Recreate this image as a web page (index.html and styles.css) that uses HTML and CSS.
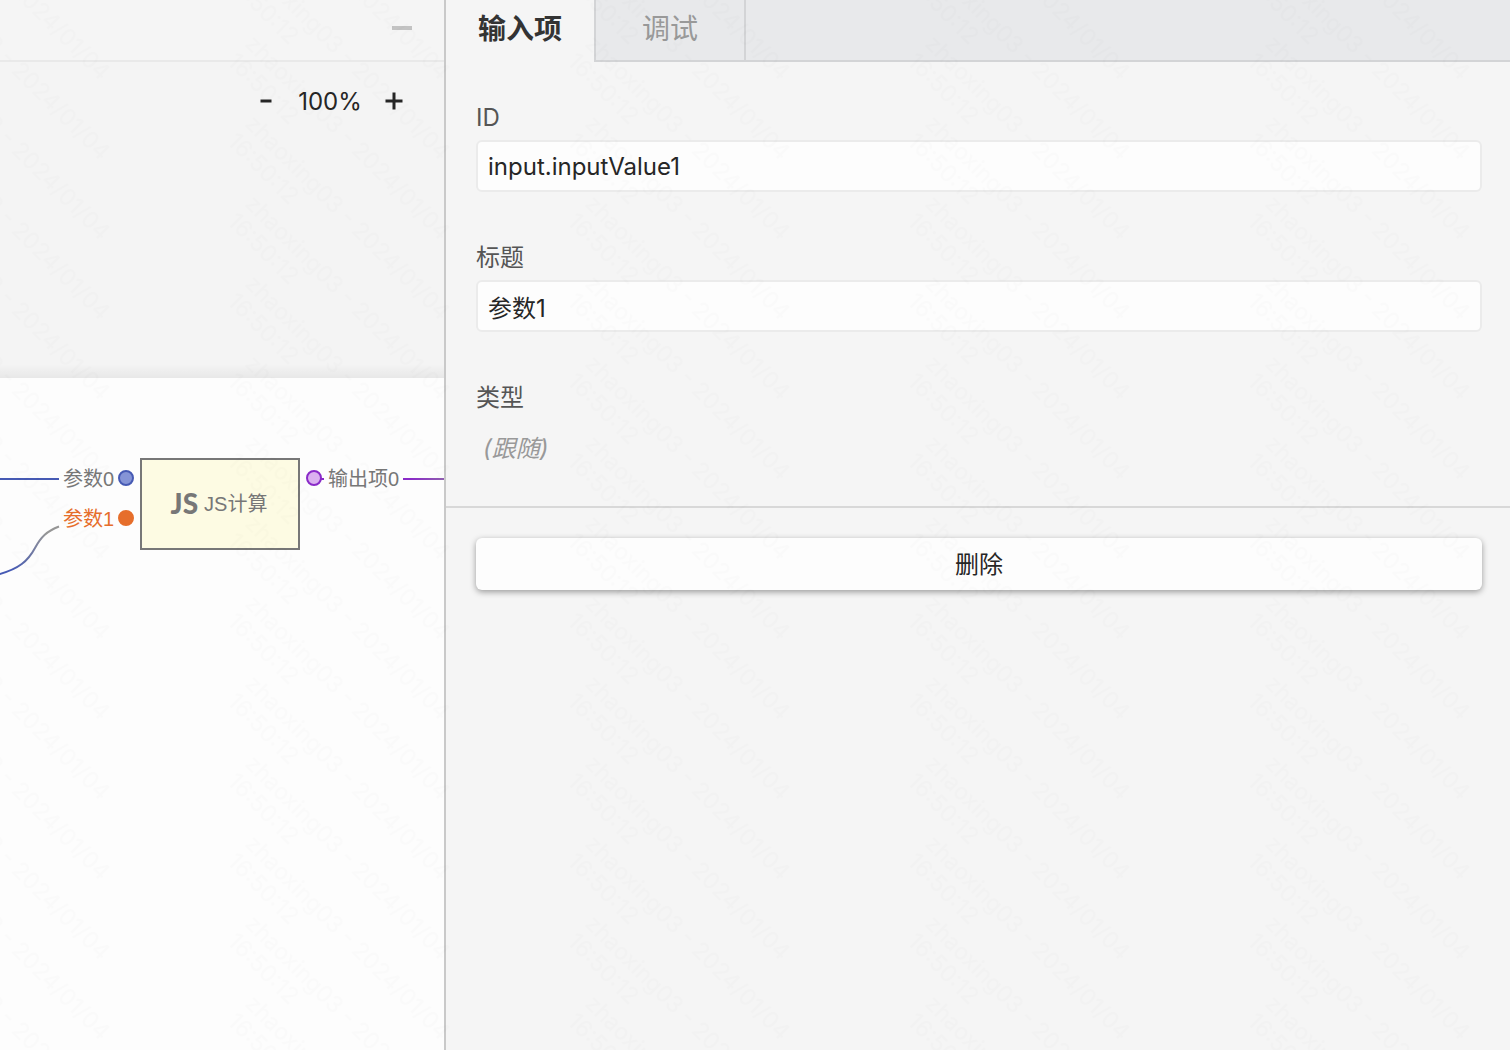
FILE: index.html
```html
<!DOCTYPE html>
<html lang="zh-CN">
<head>
<meta charset="utf-8">
<title>输入项</title>
<link rel="stylesheet" href="styles.css">
</head>
<body>
<div class="app">
  <main class="editor">
    <header class="editor-header">
      <button class="collapse" type="button" aria-label="收起"><span class="collapse-bar"></span></button>
    </header>
    <div class="zoom-area">
      <div class="zoom">
        <button class="zoom-btn" type="button" aria-label="缩小"><svg width="20" height="20" viewBox="0 0 20 20"><path d="M4.500 10H15.500" /></svg></button>
        <span class="zoom-value">100%</span>
        <button class="zoom-btn" type="button" aria-label="放大"><svg width="20" height="20" viewBox="0 0 20 20"><path d="M1.500 10H18.500M10 1.500V18.500" /></svg></button>
      </div>
    </div>
    <section class="canvas">
      <svg class="wires" width="444" height="240" viewBox="0 0 444 240" aria-hidden="true">
        <defs>
          <linearGradient id="wire-in" gradientUnits="userSpaceOnUse" x1="10" y1="190" x2="46" y2="155">
            <stop offset="0" stop-color="#465ab4" />
            <stop offset="1" stop-color="#969696" />
          </linearGradient>
          <linearGradient id="wire-out" gradientUnits="userSpaceOnUse" x1="403" y1="0" x2="480" y2="0">
            <stop offset="0.1" stop-color="#8a2bc8" />
            <stop offset="1" stop-color="#969696" />
          </linearGradient>
        </defs>
        <path d="M0 101H59" stroke="#465ab4" />
        <path d="M-2 196.500C19 191 28 183 35 170C41 159 47 153 59 148.500" stroke="url(#wire-in)" />
        <path d="M320 101H324" stroke="#8a2bc8" />
        <path d="M403 100H444V102H403Z" fill="url(#wire-out)" stroke="none" />
      </svg>
      <div class="port port-in port-first"><span>参数0</span><i class="dot dot-blue"></i></div>
      <div class="port port-in port-second"><span>参数1</span><i class="dot dot-orange"></i></div>
      <div class="node"><b class="node-logo">JS</b><span>JS计算</span></div>
      <div class="port port-out"><i class="dot dot-purple"></i><span>输出项0</span></div>
    </section>
  </main>
  <aside class="panel">
    <div class="tabs" role="tablist">
      <button class="tab tab-active" type="button" role="tab" aria-selected="true">输入项</button>
      <button class="tab" type="button" role="tab" aria-selected="false">调试</button>
      <div class="tabs-rest"></div>
    </div>
    <form class="form">
      <div class="field">
        <label for="f-id">ID</label>
        <input id="f-id" type="text" value="input.inputValue1">
      </div>
      <div class="field">
        <label for="f-title">标题</label>
        <input id="f-title" type="text" value="参数1">
      </div>
      <div class="field">
        <label for="f-type">类型</label>
        <output id="f-type">(跟随)</output>
      </div>
    </form>
    <div class="actions">
      <button class="delete" type="button">删除</button>
    </div>
  </aside>
</div>
<svg class="watermark" width="100%" height="100%" aria-hidden="true">
  <defs>
    <g id="mark" transform="translate(244 45) rotate(45)">
      <text x="0" y="0">zhaoxing03 - 2024/01/04</text>
      <text x="0" y="25">16:50:12</text>
    </g>
    <g id="column">
      <use href="#mark" y="-240" />
      <use href="#mark" y="-160" />
      <use href="#mark" y="-80" />
      <use href="#mark" />
      <use href="#mark" y="80" />
    </g>
    <pattern id="marks" width="340" height="80" patternUnits="userSpaceOnUse">
      <use href="#column" x="-340" />
      <use href="#column" />
    </pattern>
  </defs>
  <rect width="100%" height="100%" fill="url(#marks)" />
</svg>
</body>
</html>
```
FILE: styles.css
```css
* { box-sizing: border-box; }

body {
  margin: 0;
  background: #f5f5f5;
  color: #262626;
  font: 24px/34px Inter, "Noto Sans CJK SC", sans-serif;
}

button {
  margin: 0;
  padding: 0;
  border: 0;
  background: none;
  color: inherit;
  font: inherit;
  cursor: pointer;
}

.app { display: flex; min-height: 100vh; }

.editor {
  flex: 0 0 444px;
  display: flex;
  flex-direction: column;
  overflow: hidden;
}

.editor-header {
  display: flex;
  justify-content: flex-end;
  height: 62px;
  padding-right: 32px;
  border-bottom: 2px solid #e9e9e9;
}

.collapse { display: flex; align-items: center; height: 56px; }
.collapse-bar { width: 20px; height: 4px; background: #c3c3c3; }

.zoom-area {
  height: 316px;
  padding: 21px 40px;
  background: linear-gradient(#0000 302px, #0000000d) #f4f4f4;
}

.zoom { display: flex; justify-content: flex-end; align-items: center; }
.zoom-btn { display: flex; }
.zoom-btn path { fill: none; stroke: #262626; stroke-width: 3; stroke-linecap: butt; }
.zoom-value { width: 108px; padding-top: 2px; text-align: center; }

.canvas {
  position: relative;
  flex: 1;
  min-height: 240px;
  background: #fdfdfd;
  color: #777;
  font: 20px/28px "Liberation Sans", "Noto Sans CJK SC", sans-serif;
}

.wires { display: block; fill: none; stroke-width: 2; }

.port { position: absolute; display: flex; align-items: center; gap: 4px; white-space: nowrap; }
.port span { padding-top: 2px; }
.port-first { left: 63px; top: 85px; }
.port-second { left: 63px; top: 125px; color: #e66e2b; }
.port-out { left: 306px; top: 85px; gap: 6px; }

.dot { width: 16px; height: 16px; border: 2px solid; border-radius: 50%; }
.dot-blue { border-color: #465ab4; background: #8594d6; }
.dot-orange { border-color: #e66e2b; background: #e66e2b; }
.dot-purple { border-color: #8a2bc8; background: #dbb1f0; }

.node {
  position: absolute;
  left: 140px;
  top: 80px;
  display: flex;
  justify-content: center;
  align-items: center;
  gap: 6px;
  width: 160px;
  height: 92px;
  padding-right: 2px;
  border: 2px solid #777;
  background: #fdfbe3;
}

.node-logo { padding-bottom: 2px; font: 900 28px/28px Lato, sans-serif; }

.panel { flex: 1; min-width: 0; border-left: 2px solid #c9c9c9; }

.tabs { display: flex; height: 62px; font-size: 28px; }

.tab {
  width: 150px;
  padding-bottom: 2px;
  border-right: 2px solid #d3d4d6;
  border-bottom: 2px solid #d3d4d6;
  background: #e8e9eb;
  color: #999;
}

.tab-active { padding-bottom: 4px; border-bottom: 0; background: #f5f5f5; color: #333; font-weight: 700; }
.tabs-rest { flex: 1; border-bottom: 2px solid #d3d4d6; background: #e8e9eb; }

.form {
  display: flex;
  flex-direction: column;
  gap: 48px;
  padding: 38px 28px 30px 30px;
  border-bottom: 2px solid #d8d8d8;
}

.field { display: flex; flex-direction: column; gap: 6px; }
.field label { padding-top: 2px; color: #555; line-height: 32px; }

.field input {
  width: 100%;
  height: 52px;
  padding: 0 10px;
  border: 2px solid #ebebeb;
  border-radius: 6px;
  background: #fdfdfd;
  color: inherit;
  font: inherit;
}

.field output { padding: 2px 0 0 7px; color: #999; font-style: italic; line-height: 54px; }

.actions { padding: 30px 28px 30px 30px; }

.delete {
  display: block;
  width: 100%;
  height: 52px;
  padding-top: 2px;
  border-radius: 6px;
  background: #fdfdfd;
  box-shadow: 0 2px 6px #00000060;
}

.watermark {
  position: fixed;
  inset: 0;
  pointer-events: none;
  fill: #00000003;
  font: 23px Inter, sans-serif;
}
```
